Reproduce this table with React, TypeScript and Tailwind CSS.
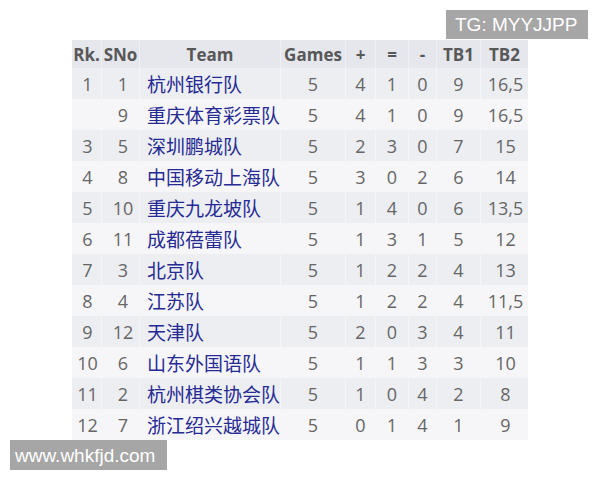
const rows = [
  { rk: '1', sno: '1', team: '杭州银行队', g: 5, w: 4, d: 1, l: 0, tb1: 9, tb2: '16,5' },
  { rk: '', sno: '9', team: '重庆体育彩票队', g: 5, w: 4, d: 1, l: 0, tb1: 9, tb2: '16,5' },
  { rk: '3', sno: '5', team: '深圳鹏城队', g: 5, w: 2, d: 3, l: 0, tb1: 7, tb2: '15' },
  { rk: '4', sno: '8', team: '中国移动上海队', g: 5, w: 3, d: 0, l: 2, tb1: 6, tb2: '14' },
  { rk: '5', sno: '10', team: '重庆九龙坡队', g: 5, w: 1, d: 4, l: 0, tb1: 6, tb2: '13,5' },
  { rk: '6', sno: '11', team: '成都蓓蕾队', g: 5, w: 1, d: 3, l: 1, tb1: 5, tb2: '12' },
  { rk: '7', sno: '3', team: '北京队', g: 5, w: 1, d: 2, l: 2, tb1: 4, tb2: '13' },
  { rk: '8', sno: '4', team: '江苏队', g: 5, w: 1, d: 2, l: 2, tb1: 4, tb2: '11,5' },
  { rk: '9', sno: '12', team: '天津队', g: 5, w: 2, d: 0, l: 3, tb1: 4, tb2: '11' },
  { rk: '10', sno: '6', team: '山东外国语队', g: 5, w: 1, d: 1, l: 3, tb1: 3, tb2: '10' },
  { rk: '11', sno: '2', team: '杭州棋类协会队', g: 5, w: 1, d: 0, l: 4, tb1: 2, tb2: '8' },
  { rk: '12', sno: '7', team: '浙江绍兴越城队', g: 5, w: 0, d: 1, l: 4, tb1: 1, tb2: '9' },
];

const headers = ['Rk.', 'SNo', 'Team', 'Games', '+', '=', '-', 'TB1', 'TB2'];

// column widths taken from the screenshot
const cols = 'grid grid-cols-[30px_38px_141px_65px_30px_33px_28px_44px_47px]';

export default function App() {
  return (
    <div className="relative w-[600px] h-[480px] bg-white overflow-hidden font-['Open_Sans','Noto_Sans_CJK_SC',sans-serif]">
      <div className="pt-[40px] pl-[72px]">
        <div className="w-[456px]">
          {/* header */}
          <div className={`${cols} h-[28px] bg-[#e5e7ed]`}>
            {headers.map((h) => (
              <div
                key={h}
                className="flex items-center justify-center border-r border-[#eef0f4] last:border-r-0 text-[17px] font-bold text-[#585858] leading-none whitespace-nowrap"
              >
                {h}
              </div>
            ))}
          </div>

          {/* rows */}
          {rows.map((r, i) => (
            <div
              key={i}
              className={`${cols} h-[31px] ${i % 2 === 0 ? 'bg-[#eceef2]' : 'bg-[#f6f6f8]'} text-[18px] leading-none text-[#666]`}
            >
              <div className="flex items-center justify-center pl-[2px] border-r border-[#f4f5f7]">{r.rk}</div>
              <div className="flex items-center justify-center pl-[5px] border-r border-[#f4f5f7]">{r.sno}</div>
              <div className="flex items-center pl-[7px] pt-[3px] text-[#262a94] text-[19px] whitespace-nowrap border-r border-[#f4f5f7]">
                {r.team}
              </div>
              <div className="flex items-center justify-center border-r border-[#f4f5f7]">{r.g}</div>
              <div className="flex items-center justify-center border-r border-[#f4f5f7]">{r.w}</div>
              <div className="flex items-center justify-center border-r border-[#f4f5f7]">{r.d}</div>
              <div className="flex items-center justify-center border-r border-[#f4f5f7]">{r.l}</div>
              <div className="flex items-center justify-center border-r border-[#f4f5f7]">{r.tb1}</div>
              <div className="flex items-center justify-center pl-[2px]">{r.tb2}</div>
            </div>
          ))}
        </div>
      </div>

      {/* watermarks */}
      <div className="absolute left-[446px] top-[10px] w-[142px] h-[29px] bg-[#a6a6a6] flex items-center pl-[9px] text-white text-[19px] leading-none font-['Liberation_Sans',sans-serif]">
        TG: MYYJJPP
      </div>
      <div className="absolute left-[10px] top-[440px] w-[157px] h-[30px] bg-[#a6a6a6] flex items-center pl-[5px] text-white text-[19px] leading-none font-['Liberation_Sans',sans-serif]">
        www.whkfjd.com
      </div>
    </div>
  );
}
